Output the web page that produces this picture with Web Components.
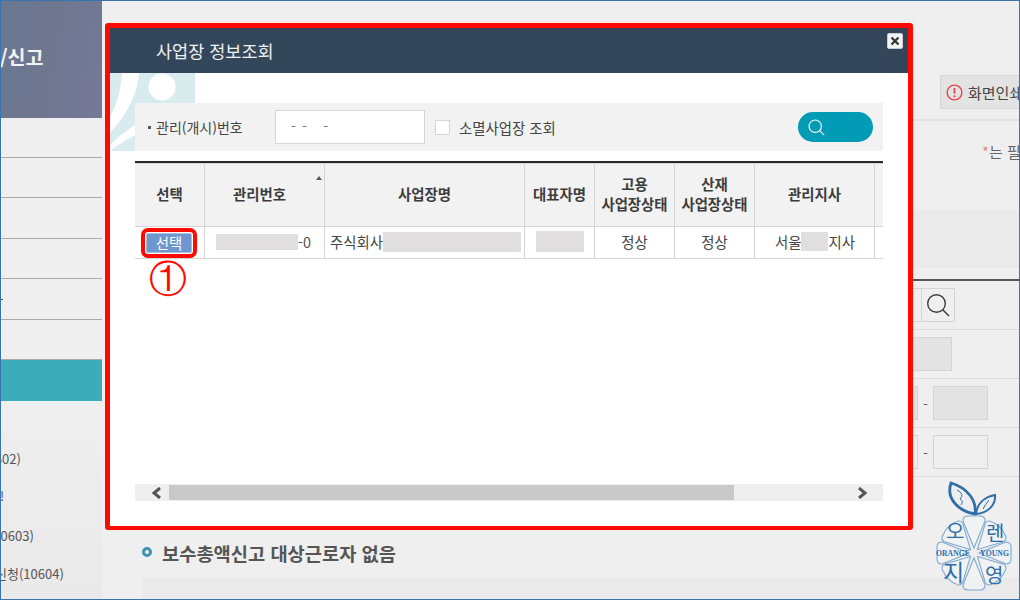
<!DOCTYPE html>
<html lang="ko">
<head>
<meta charset="utf-8">
<title>사업장 정보조회</title>
<style>
  html, body { margin: 0; padding: 0; }
  body { font-family: "Noto Sans CJK KR", "Noto Sans", sans-serif; }
</style>
</head>
<body>
<app-window>
  <app-sidebar>
    <side-head>/신고</side-head>
    <side-line></side-line><side-line></side-line><side-line></side-line><side-line></side-line><side-line tick></side-line>
    <side-active></side-active>
    <side-link indent="-25" top="48">(10602)</side-link>
    <side-link indent="-1" top="17">!</side-link>
    <side-link indent="-12" top="20">(10603)</side-link>
    <side-link indent="-6" top="18">신청(10604)</side-link>
  </app-sidebar>
  <app-main></app-main>
  <info-modal></info-modal>
  <site-logo></site-logo>
</app-window>

<script>
class AppWindow extends HTMLElement {
  constructor() {
    super();
    this.attachShadow({mode:'open'}).innerHTML = `
      <style>
        :host {
          display: flex;
          position: relative;
          box-sizing: border-box;
          width: 1020px;
          height: 600px;
          overflow: hidden;
          border: 1px solid #3a74ae;
          background: #efefef;
        }
      </style>
      <slot></slot>`;
  }
}

class AppSidebar extends HTMLElement {
  constructor() {
    super();
    this.attachShadow({mode:'open'}).innerHTML = `
      <style>
        :host {
          display: block;
          flex: 0 0 101px;
          width: 101px;
          height: 598px;
          overflow: hidden;
          background: linear-gradient(#efefef 400px, #e9e9e9 598px);
        }
      </style>
      <slot></slot>`;
  }
}

class SideHead extends HTMLElement {
  constructor() {
    super();
    this.attachShadow({mode:'open'}).innerHTML = `
      <style>
        :host {
          display: block;
          box-sizing: border-box;
          height: 116.6px;
          padding: 38px 0 0 0;
          margin-left: -1px;
          background: linear-gradient(100deg, #6a7892 0%, #6f7690 45%, #747a96 100%);
          color: #f4f4f4;
          font-size: 19.5px;
          font-weight: 700;
          line-height: 36px;
          white-space: nowrap;
        }
      </style>
      <slot></slot>`;
  }
}

class SideLine extends HTMLElement {
  constructor() {
    super();
    this.attachShadow({mode:'open'}).innerHTML = `
      <style>
        :host {
          display: block;
          position: relative;
          box-sizing: border-box;
          height: 40.4px;
          border-bottom: 1px solid #a9a9a9;
        }
        :host([tick])::after {
          content: "";
          position: absolute;
          left: 0;
          top: 20px;
          width: 2px;
          height: 1px;
          background: #555;
        }
      </style>`;
  }
}

class SideActive extends HTMLElement {
  constructor() {
    super();
    this.attachShadow({mode:'open'}).innerHTML = `
      <style>
        :host {
          display: block;
          height: 41px;
          margin-top: 39.4px;
          border-top: 1px solid #a9a9a9;
          background: #3aadb9;
        }
      </style>`;
  }
}

class SideLink extends HTMLElement {
  constructor() {
    super();
    const indent = this.getAttribute('indent') ?? '0';
    const top = this.getAttribute('top') ?? '0';
    this.attachShadow({mode:'open'}).innerHTML = `
      <style>
        :host {
          display: block;
          height: 20px;
          margin-top: ${top}px;
          margin-left: ${indent}px;
          color: #555;
          font-size: 13px;
          line-height: 20px;
          white-space: nowrap;
        }
      </style>
      <slot></slot>`;
  }
}

class PrintButton extends HTMLElement {
  constructor() {
    super();
    this.attachShadow({mode:'open'}).innerHTML = `
      <style>
        :host {
          display: flex;
          align-items: center;
          gap: 5px;
          box-sizing: border-box;
          width: 110px;
          height: 34px;
          padding-left: 5px;
          margin-left: 838px;
          background: #e3e3e3;
          border: 1px solid #d6d6d6;
          color: #444;
          font-size: 15px;
          white-space: nowrap;
        }
        svg { flex: none; }
      </style>
      <svg width="17" height="17" viewBox="0 0 17 17">
        <circle cx="8.5" cy="8.5" r="7.4" fill="none" stroke="#e8434b" stroke-width="1.4"/>
        <path d="M8.5 4v5.6" stroke="#e8434b" stroke-width="1.8"/>
        <circle cx="8.5" cy="12.3" r="1.1" fill="#e8434b"/>
      </svg>
      <span>화면인쇄</span>`;
  }
}

class FormRow extends HTMLElement {
  constructor() {
    super();
    this.attachShadow({mode:'open'}).innerHTML = `
      <style>
        :host {
          display: flex;
          justify-content: flex-end;
          align-items: center;
          box-sizing: border-box;
          height: 49px;
          border-bottom: 1px solid #dcdcdc;
          color: #555;
          font-size: 13px;
        }
      </style>
      <slot></slot>`;
  }
}

class FormBox extends HTMLElement {
  constructor() {
    super();
    const w = this.getAttribute('w') ?? '55';
    const fill = this.getAttribute('fill') ?? '#e3e3e3';
    this.attachShadow({mode:'open'}).innerHTML = `
      <style>
        :host {
          display: flex;
          align-items: center;
          justify-content: center;
          box-sizing: border-box;
          flex: none;
          width: ${w}px;
          height: 34px;
          background: ${fill};
          border: 1px solid #d4d4d4;
        }
      </style>
      <slot></slot>`;
  }
}

class AppMain extends HTMLElement {
  constructor() {
    super();
    this.attachShadow({mode:'open'}).innerHTML = `
      <style>
        :host {
          display: block;
          flex: 1;
          min-width: 0;
          height: 598px;
          overflow: hidden;
          padding-top: 74px;
          box-sizing: border-box;
        }
        .rule { height: 2px; margin: 10px 0 0 40px; background: #e3e3e3; }
        .note {
          height: 20px;
          margin-top: 21px;
          padding-left: 880px;
          color: #666;
          font-size: 15px;
          line-height: 20px;
          white-space: nowrap;
        }
        .note b { color: #e98a92; font-weight: 400; }
        .band { height: 59px; margin: 47px 0 0 40px; background: #eaeaea; }
        .form { margin: 11px 0 0 40px; border-top: 2px solid #555; }
        .r1 { padding-right: 64px; }
        .r2 { padding-right: 67px; }
        .r3 { padding-right: 31px; }
        .dash { width: 15px; text-align: center; }
        .title {
          display: flex;
          align-items: center;
          gap: 10px;
          height: 26px;
          margin: 62px 0 0 40px;
          color: #555;
          font-size: 18.7px;
          font-weight: 700;
          white-space: nowrap;
        }
        .dot {
          box-sizing: border-box;
          width: 10px;
          height: 10px;
          border: 3px solid #3a94ae;
          border-radius: 50%;
          background: #f2f2f2;
        }
        .grey { height: 30px; margin: 13px 0 0 40px; background: #eaeaea; }
      </style>
      <print-button></print-button>
      <div class="rule"></div>
      <div class="note"><b>*</b>는 필수입력</div>
      <div class="band"></div>
      <div class="form">
        <form-row class="r1">
          <form-box w="60" fill="#efefef"></form-box>
          <form-box w="34" fill="#efefef" style="margin-left:-1px">
            <svg width="26" height="26" viewBox="0 0 26 26">
              <circle cx="11.5" cy="11.5" r="8.8" fill="none" stroke="#3c3c3c" stroke-width="1.4"/>
              <path d="M18 18l6 6" stroke="#3c3c3c" stroke-width="1.5"/>
            </svg>
          </form-box>
        </form-row>
        <form-row class="r2"><form-box w="60"></form-box></form-row>
        <form-row class="r3"><form-box w="55"></form-box><span class="dash">-</span><form-box w="55"></form-box></form-row>
        <form-row class="r3"><form-box w="55" fill="#efefef"></form-box><span class="dash">-</span><form-box w="55" fill="#efefef"></form-box></form-row>
      </div>
      <div class="title"><span class="dot"></span><span>보수총액신고 대상근로자 없음</span></div>
      <div class="grey"></div>`;
  }
}

class ModalFilter extends HTMLElement {
  constructor() {
    super();
    this.attachShadow({mode:'open'}).innerHTML = `
      <style>
        :host {
          display: flex;
          align-items: center;
          box-sizing: border-box;
          height: 48px;
          padding: 0 10px 0 13px;
          background: #f2f2f2;
          color: #444;
          font-size: 14.4px;
          white-space: nowrap;
        }
        .bullet { width: 3px; height: 3px; background: #555; margin-right: 5px; }
        .label { width: 119px; font-size: 14px; }
        .input {
          box-sizing: border-box;
          width: 150px;
          height: 34px;
          padding-left: 15px;
          background: #fff;
          border: 1px solid #d6d6d6;
          color: #777;
          letter-spacing: 1px;
          line-height: 30px;
          white-space: pre;
        }
        .check {
          box-sizing: border-box;
          width: 15px;
          height: 15px;
          margin: 0 9px 0 10px;
          background: #fff;
          border: 1px solid #d3d7da;
        }
        .go {
          display: flex;
          align-items: center;
          box-sizing: border-box;
          width: 75px;
          height: 30px;
          margin-left: auto;
          padding-left: 10px;
          border-radius: 15px;
          background: #019bb5;
        }
      </style>
      <span class="bullet"></span><span class="label">관리(개시)번호</span>
      <span class="input">- -   -</span>
      <span class="check"></span><span>소멸사업장 조회</span>
      <span class="go">
        <svg width="17" height="17" viewBox="0 0 17 17">
          <circle cx="7.2" cy="7.2" r="6.2" fill="none" stroke="#eaf6f8" stroke-width="1.2"/>
          <path d="M11.8 11.8l4.4 4.4" stroke="#eaf6f8" stroke-width="1.2"/>
        </svg>
      </span>`;
  }
}

class HideBox extends HTMLElement {
  constructor() {
    super();
    const w = this.getAttribute('w') ?? '40';
    const h = this.getAttribute('h') ?? '20';
    this.attachShadow({mode:'open'}).innerHTML = `
      <style>
        :host {
          display: inline-block;
          flex: none;
          width: ${w}px;
          height: ${h}px;
          background: #e0dede;
        }
      </style>`;
  }
}

class BizTable extends HTMLElement {
  constructor() {
    super();
    this.attachShadow({mode:'open'}).innerHTML = `
      <style>
        :host {
          display: block;
          height: 323px;
          border-top: 2px solid #2b2b2b;
          box-sizing: border-box;
          overflow: hidden;
        }
        table {
          table-layout: fixed;
          width: 748px;
          border-collapse: separate;
          border-spacing: 0;
          color: #444;
          font-size: 14.4px;
        }
        th, td {
          box-sizing: border-box;
          padding: 0;
          text-align: center;
          border-right: 1px solid #d4d4d8;
          border-bottom: 1px solid #d4d4d8;
          white-space: nowrap;
        }
        tr > :last-child { border-right: 0; }
        th {
          position: relative;
          height: 64px;
          padding-bottom: 2px;
          background: #f2f2f2;
          border-top: 1px solid #d4d4d8;
          color: #3c3c3c;
          font-weight: 700;
          line-height: 20px;
        }
        th.num { padding-right: 10px; }
        td { height: 32px; padding-bottom: 2px; background: #fff; }
        .sort {
          position: absolute;
          top: 12px;
          right: 2px;
          width: 0;
          height: 0;
          border: 3.5px solid transparent;
          border-top: 0;
          border-bottom: 4px solid #555;
        }
        td.pick { position: relative; padding-bottom: 0; }
        button {
          display: block;
          box-sizing: border-box;
          width: 46px;
          height: 20px;
          margin: 0 0 0 11px;
          padding: 0;
          border: 1px solid #a9bfe0;
          border-radius: 2px;
          outline: 4px solid #ff0a00;
          outline-offset: 1px;
          background: #6f96ce;
          color: #fff;
          font: inherit;
          line-height: 17px;
        }
        .mark {
          position: absolute;
          left: 0;
          top: 30px;
          width: 66px;
          color: #ff0a00;
          font-family: "DejaVu Serif", serif;
          font-size: 38px;
          line-height: 44px;
          font-weight: 400;
        }
        .cell { display: flex; align-items: center; }
        .no { padding-left: 11px; color: #555; }
        .name { padding-left: 5px; }
        .ceo { justify-content: center; }
        .branch { padding-left: 20px; }
      </style>
      <table>
        <colgroup>
          <col style="width:70px"><col style="width:120px"><col style="width:200px"><col style="width:70px">
          <col style="width:80px"><col style="width:80px"><col style="width:120px"><col style="width:8px">
        </colgroup>
        <tr>
          <th>선택</th>
          <th class="num">관리번호<span class="sort"></span></th>
          <th>사업장명</th>
          <th>대표자명</th>
          <th>고용<br>사업장상태</th>
          <th>산재<br>사업장상태</th>
          <th>관리지사</th>
          <th></th>
        </tr>
        <tr>
          <td class="pick"><button>선택</button><span class="mark">①</span></td>
          <td><div class="cell no"><hide-box w="82" h="16"></hide-box><span>-0</span></div></td>
          <td><div class="cell name"><span>주식회사</span><hide-box w="138" h="20"></hide-box></div></td>
          <td><div class="cell ceo"><hide-box w="48" h="21"></hide-box></div></td>
          <td>정상</td>
          <td>정상</td>
          <td><div class="cell branch"><span>서울</span><hide-box w="27" h="19"></hide-box><span>지사</span></div></td>
          <td></td>
        </tr>
      </table>`;
  }
}

class HScrollbar extends HTMLElement {
  constructor() {
    super();
    this.attachShadow({mode:'open'}).innerHTML = `
      <style>
        :host {
          display: flex;
          align-items: center;
          box-sizing: border-box;
          height: 17px;
          background: #efefef;
        }
        .arrow { flex: none; display: flex; justify-content: center; box-sizing: border-box; width: 34px; }
        .left { padding-left: 8px; }
        .thumb { flex: none; width: 565px; height: 15px; background: #c9c9c9; }
        .right { margin-left: 111px; }
      </style>
      <span class="arrow left">
        <svg width="11" height="12" viewBox="0 0 11 12"><path d="M9 1L3 6l6 5" fill="none" stroke="#555" stroke-width="3"/></svg>
      </span>
      <span class="thumb"></span>
      <span class="arrow right">
        <svg width="11" height="12" viewBox="0 0 11 12"><path d="M2 1l6 5-6 5" fill="none" stroke="#555" stroke-width="3"/></svg>
      </span>`;
  }
}

class InfoModal extends HTMLElement {
  constructor() {
    super();
    this.attachShadow({mode:'open'}).innerHTML = `
      <style>
        :host {
          display: block;
          position: absolute;
          left: 104px;
          top: 22px;
          box-sizing: border-box;
          width: 808px;
          height: 507px;
          border: 5px solid #ff0a00;
          border-bottom-width: 4px;
          border-radius: 3px;
          background: #fff;
          overflow: hidden;
        }
        .head {
          display: flex;
          align-items: center;
          box-sizing: border-box;
          height: 45px;
          padding-left: 46px;
          background: #34465a;
          color: #eef1f3;
          font-size: 17.5px;
        }
        .close {
          position: absolute;
          left: 777px;
          top: 5px;
          display: flex;
          align-items: center;
          justify-content: center;
          box-sizing: border-box;
          width: 16px;
          height: 16px;
          background: #f4f4f4;
          border: 1px solid #c8ccd0;
          border-radius: 2px;
        }
        .body { position: relative; height: 453px; padding: 30px 25px 0; box-sizing: border-box; }
        .mark { position: absolute; left: 0; top: 0; }
        .inner { position: relative; }
        .gap { height: 10px; }
      </style>
      <div class="head">사업장 정보조회</div>
      <div class="close">
        <svg width="10" height="10" viewBox="0 0 10 10"><path d="M1.5 1.5l7 7M8.5 1.5l-7 7" stroke="#333" stroke-width="2.2"/></svg>
      </div>
      <div class="body">
        <svg class="mark" width="90" height="78" viewBox="0 0 90 78">
          <path d="M0 0H85V30H25V78H0Z" fill="#d8ecef"/>
          <path d="M12 0C11 18 6 33 0 44V60C14 45 27 25 29 0Z" fill="#fff"/>
          <path d="M25 52V62C15 68 6 73 0 78V72C8 64 16 58 25 52Z" fill="#fff"/>
          <circle cx="52" cy="14" r="13.5" fill="#fff"/>
        </svg>
        <div class="inner">
          <modal-filter></modal-filter>
          <div class="gap"></div>
          <biz-table></biz-table>
          <h-scrollbar></h-scrollbar>
        </div>
      </div>`;
  }
}

class SiteLogo extends HTMLElement {
  constructor() {
    super();
    let petals = '';
    for (let a = 0; a < 360; a += 45) {
      const d = a % 90 === 0
        ? 'M0 -5L-11 -32Q-11 -37 -6 -37H6Q11 -37 11 -32Z'
        : 'M0 -5L-13 -29Q-14 -34 -8 -35Q0 -38 8 -35Q14 -34 13 -29Z';
      petals += `<path d="${d}" transform="rotate(${a})" fill="#f2f4f6" fill-opacity=".7" stroke="#7fa8cf" stroke-width="1.1"/>`;
    }
    this.attachShadow({mode:'open'}).innerHTML = `
      <style>
        :host {
          display: block;
          position: absolute;
          left: 929px;
          top: 474px;
          width: 90px;
          height: 124px;
        }
        text { fill: #2f6ea8; font-family: "Noto Sans CJK KR", sans-serif; }
        .latin { font-family: "Liberation Serif", serif; font-size: 9px; font-weight: 700; }
      </style>
      <svg width="90" height="124" viewBox="0 0 90 124">
        <path d="M21 8C38 13 47 26 45 39C32 37 15 26 21 8Z" fill="none" stroke="#2f6ea8" stroke-width="2.8"/>
        <path d="M27 15Q35 19 30 24Q34 26 31 30" fill="none" stroke="#2f6ea8" stroke-width="1"/>
        <path d="M65 20C66 30 58 38 46 39C47 29 54 22 65 20Z" fill="none" stroke="#2f6ea8" stroke-width="2"/>
        <path d="M59 25Q55 30 53 34" fill="none" stroke="#2f6ea8" stroke-width="1"/>
        <g transform="translate(44 78)">${petals}</g>
        <text x="16" y="64" font-size="20">오</text>
        <text x="56" y="66" font-size="20">렌</text>
        <text x="13" y="106" font-size="23">지</text>
        <text x="55" y="108" font-size="20">영</text>
        <text class="latin" x="6" y="81" textLength="34" lengthAdjust="spacingAndGlyphs">ORANGE</text>
        <text class="latin" x="50" y="81" textLength="29" lengthAdjust="spacingAndGlyphs">YOUNG</text>
      </svg>`;
  }
}

customElements.define('app-window', AppWindow);
customElements.define('app-sidebar', AppSidebar);
customElements.define('side-head', SideHead);
customElements.define('side-line', SideLine);
customElements.define('side-active', SideActive);
customElements.define('side-link', SideLink);
customElements.define('print-button', PrintButton);
customElements.define('form-row', FormRow);
customElements.define('form-box', FormBox);
customElements.define('app-main', AppMain);
customElements.define('modal-filter', ModalFilter);
customElements.define('hide-box', HideBox);
customElements.define('biz-table', BizTable);
customElements.define('h-scrollbar', HScrollbar);
customElements.define('info-modal', InfoModal);
customElements.define('site-logo', SiteLogo);
</script>
</body>
</html>
